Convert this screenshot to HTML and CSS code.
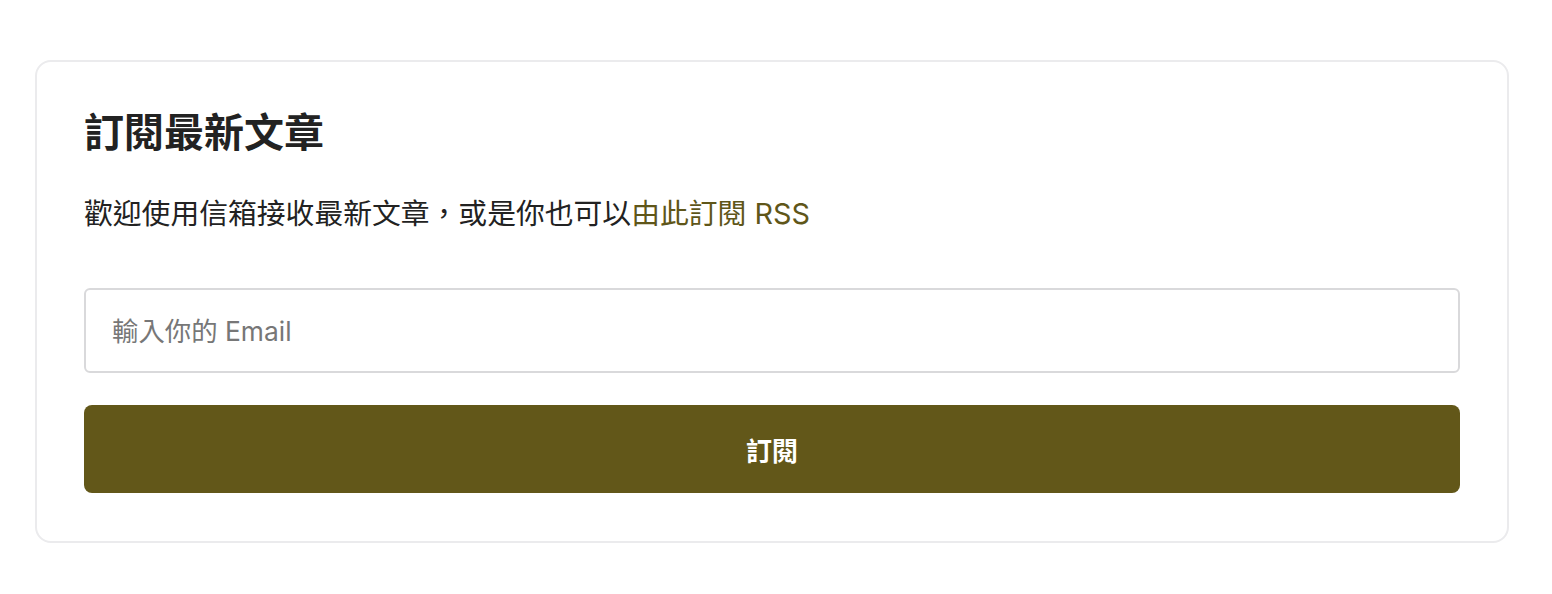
FILE: index.html
```html
<!DOCTYPE html>
<html lang="zh-Hant">
<head>
<meta charset="utf-8">
<link rel="stylesheet" href="styles.css">
</head>
<body>
<main class="page">
  <section class="card">
    <h2 class="title">訂閱最新文章</h2>
    <p class="desc">歡迎使用信箱接收最新文章，或是你也可以<a class="link" href="#">由此訂閱 RSS</a></p>
    <form class="form">
      <input class="email" type="email" placeholder="輸入你的 Email">
      <button class="btn" type="button">訂閱</button>
    </form>
  </section>
</main>
</body>
</html>
```
FILE: styles.css
```css
html, body {
  margin: 0;
  padding: 0;
  background: #ffffff;
}
.page {
  padding: 60px 43px 0 35px;
  font-family: "Inter", "Noto Sans CJK TC", sans-serif;
  color: #222222;
}
.card {
  border: 2px solid #ebebed;
  border-radius: 16px;
  padding: 47px 47px 48px 47px;
  display: flex;
  flex-direction: column;
}
.title {
  margin: 0;
  font-size: 40px;
  line-height: 48px;
  font-weight: 700;
  color: #222222;
}
.desc {
  margin: 37px 0 0 0;
  font-size: 28.8px;
  line-height: 40px;
  color: #222222;
}
.link {
  color: #5f5619;
  text-decoration: none;
}
.form {
  margin: 54px 0 0 0;
  display: flex;
  flex-direction: column;
  gap: 32px;
}
.email {
  box-sizing: border-box;
  height: 85px;
  border: 2px solid #d9d9db;
  border-radius: 6px;
  padding: 0 26px;
  font-family: "Inter", "Noto Sans CJK TC", sans-serif;
  font-size: 26.4px;
  color: #222222;
  outline: none;
}
.email::placeholder {
  color: #777777;
}
.btn {
  height: 88px;
  border: none;
  border-radius: 8px;
  background: #625719;
  color: #ffffff;
  font-family: "Inter", "Noto Sans CJK TC", sans-serif;
  font-size: 26px;
  font-weight: 700;
  cursor: pointer;
}
```
